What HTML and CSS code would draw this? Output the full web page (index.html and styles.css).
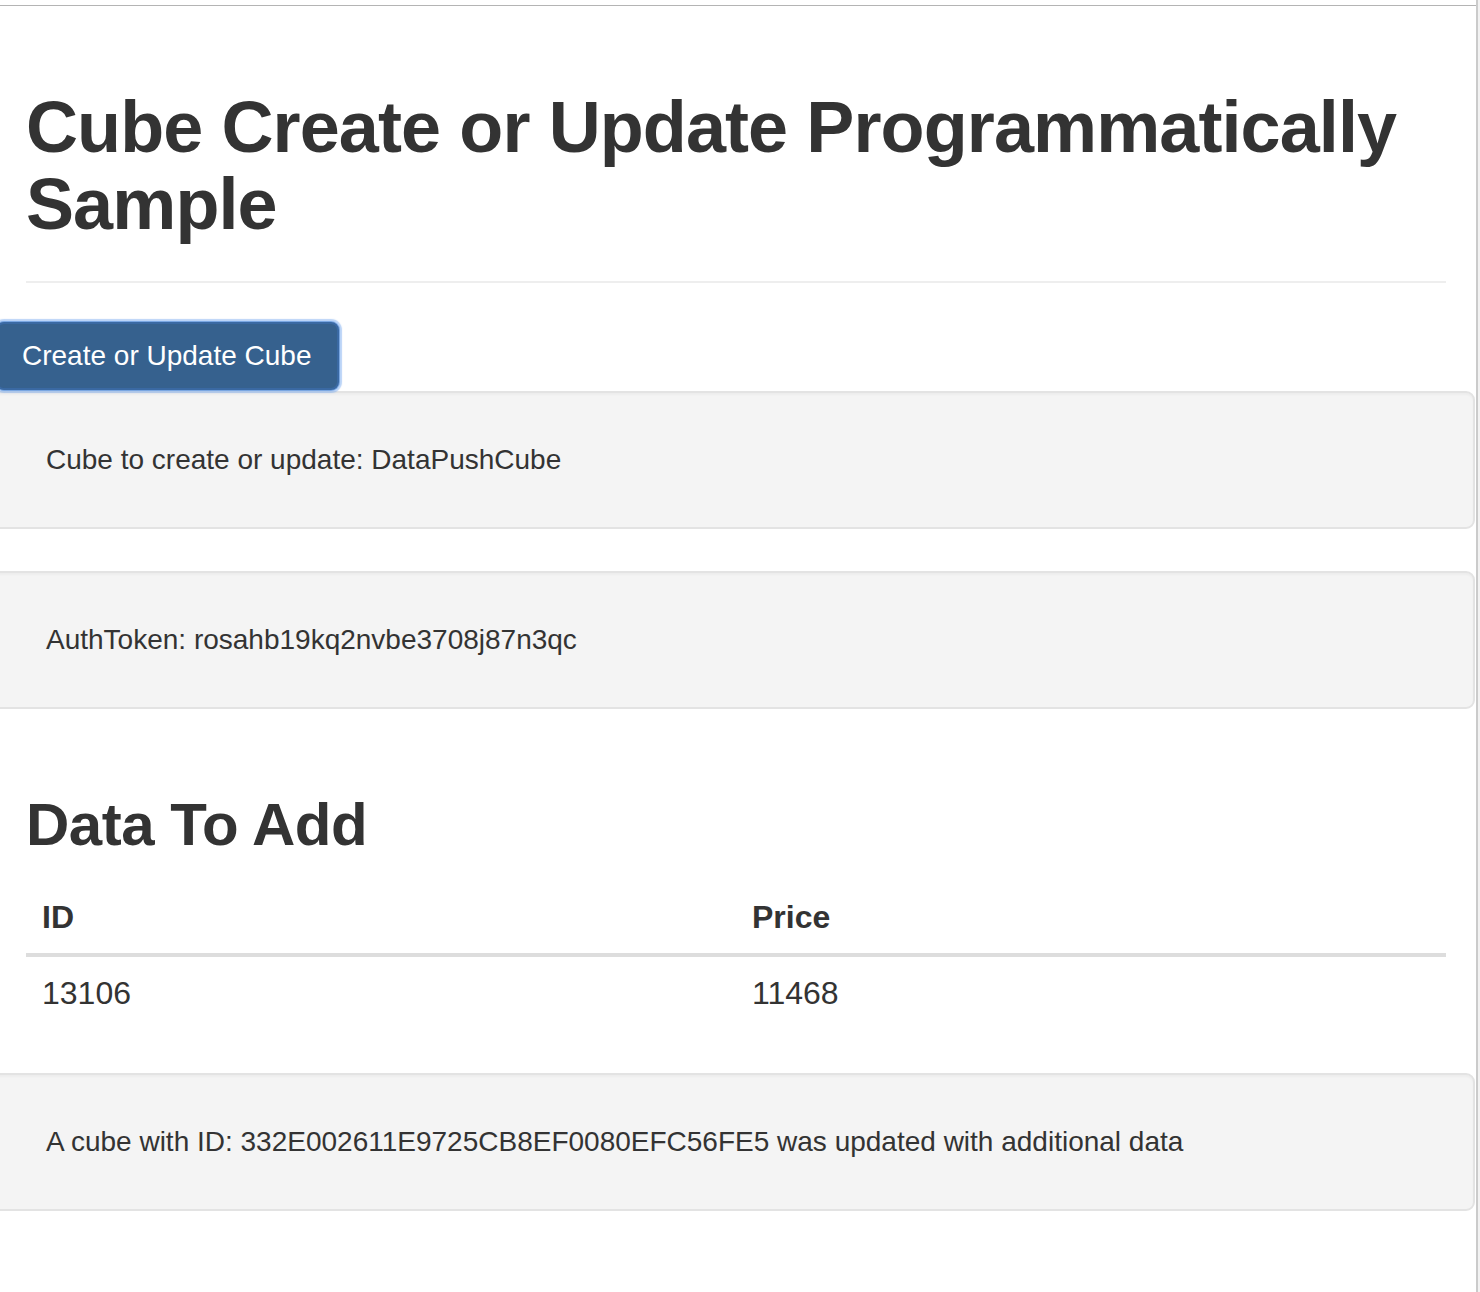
FILE: index.html
```html
<!DOCTYPE html>
<html lang="en">
<head>
<meta charset="utf-8">
<title>Cube Create or Update Programmatically Sample</title>
<link rel="stylesheet" href="styles.css">
</head>
<body>
<div class="page">
  <div class="main">
    <div class="topline"></div>
    <div class="inset">
      <h1 class="title">Cube Create or Update Programmatically Sample</h1>
      <hr class="rule">
    </div>
    <button class="btn-primary" type="button">Create or Update Cube</button>
    <div class="well well-first">Cube to create or update: DataPushCube</div>
    <div class="well">AuthToken: rosahb19kq2nvbe3708j87n3qc</div>
    <div class="inset">
      <h2 class="subtitle">Data To Add</h2>
      <table class="data-table">
        <thead>
          <tr><th>ID</th><th>Price</th></tr>
        </thead>
        <tbody>
          <tr><td>13106</td><td>11468</td></tr>
        </tbody>
      </table>
    </div>
    <div class="well well-last">A cube with ID: 332E002611E9725CB8EF0080EFC56FE5 was updated with additional data</div>
  </div>
  <div class="edge"></div>
</div>
</body>
</html>
```

FILE: styles.css
```css
* { box-sizing: border-box; }

html, body {
  margin: 0;
  padding: 0;
  background: #ffffff;
}

body {
  font-family: "Liberation Sans", Arial, Helvetica, sans-serif;
  color: #333333;
  font-size: 28px;
  line-height: 40px;
}

.page {
  display: flex;
  min-height: 1292px;
  overflow: hidden;
}

.main {
  width: 1476px;
  flex: none;
}

.edge {
  width: 4px;
  flex: none;
  border-left: 2px solid #cbcbcb;
  background: #f2f2f2;
}

.topline {
  height: 6px;
  border-bottom: 1px solid #b4b4b4;
}

.inset {
  padding: 0 30px 0 26px;
}

.title {
  margin: 83px 0 0;
  font-size: 72px;
  line-height: 77px;
  font-weight: bold;
  letter-spacing: -0.9px;
}

.rule {
  margin: 38px 0 0;
  border: 0;
  border-top: 2px solid #eeeeee;
  height: 0;
}

.btn-primary {
  display: block;
  position: relative;
  z-index: 1;
  margin: 39px 0 0 -4px;
  padding: 12px 25px 12px 24px;
  font-family: inherit;
  font-size: 28px;
  line-height: 40px;
  height: 68px;
  color: #ffffff;
  background: #36618e;
  border: 2px solid #3a69a3;
  border-radius: 8px;
  box-shadow: 0 0 0 1px #7aa7e2, 0 0 1px 3px rgba(120, 170, 240, 0.5);
  cursor: pointer;
}

.well {
  margin: 0 1px 0 -10px;
  padding: 47px 20px 47px 54px;
  background: #f4f4f4;
  border: 2px solid #e3e3e3;
  border-radius: 9px;
  box-shadow: inset 0 2px 2px rgba(0, 0, 0, 0.03);
  min-height: 138px;
}

.well-first {
  margin-top: 1px;
  margin-bottom: 42px;
}

.subtitle {
  margin: 83px 0 0;
  font-size: 60px;
  line-height: 66px;
  font-weight: bold;
  letter-spacing: -0.5px;
}

.data-table {
  margin-top: 23px;
  width: 100%;
  border-collapse: collapse;
  table-layout: fixed;
  font-size: 32px;
}

.data-table th,
.data-table td {
  padding: 16px;
  text-align: left;
  line-height: 40px;
  vertical-align: middle;
}

.data-table th {
  font-weight: bold;
  border-bottom: 4px solid #dddddd;
}

.well-last {
  margin-top: 44px;
}
```
